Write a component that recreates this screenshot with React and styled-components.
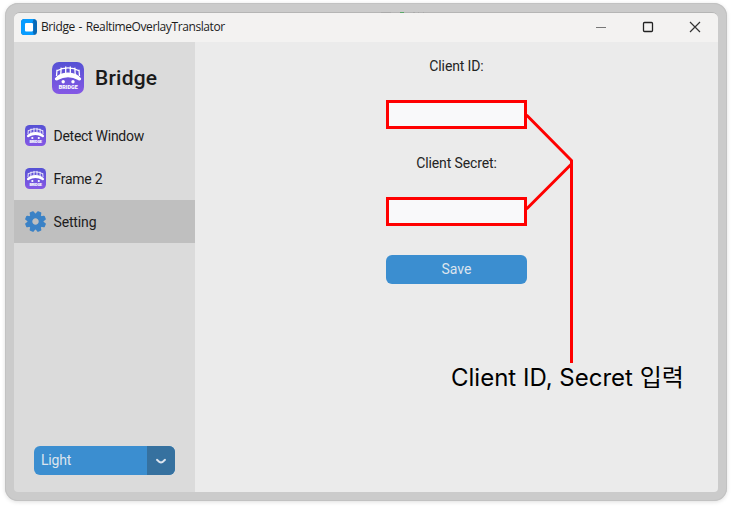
import React from 'react';
import styled, { createGlobalStyle } from 'styled-components';

const GlobalStyle = createGlobalStyle`
  *, *::before, *::after { box-sizing: border-box; }
  body { margin: 0; background: #fff; font-family: Roboto, "Noto Sans CJK KR", sans-serif; }
  svg { display: block; flex: none; }
`;

const Page = styled.main`
  position: relative;
  width: 732px;
  height: 508px;
  padding: 3px 5px 7px;
  overflow: hidden;
`;

const Frame = styled.div`
  width: 722px;
  height: 498px;
  padding: 9px 9px 9px;
  border-radius: 13px;
  background: #cbcbcb;
  box-shadow: inset 0 0 0 1px #c2c2c2, 0 1px 4px rgba(0, 0, 0, 0.13);
`;

const AppWindow = styled.div`
  display: flex;
  flex-direction: column;
  height: 480px;
  border-top: 1px solid #b5b5b5;
  border-radius: 6px 6px 4px 4px;
  overflow: hidden;
`;

const TitleBar = styled.header`
  display: flex;
  align-items: center;
  flex: none;
  height: 29px;
  padding: 0 17.5px 1px 7px;
  background: #f3f2f1;
`;

const WindowTitle = styled.span`
  margin-left: 4px;
  font: 12px/20px "Open Sans", sans-serif;
  letter-spacing: -0.4px;
  word-spacing: 1px;
  color: #1c1c1c;
  white-space: nowrap;
`;

const WindowControls = styled.div`
  display: flex;
  align-items: center;
  gap: 35px;
  margin-left: auto;
`;

const Body = styled.div`
  display: flex;
  flex: 1;
`;

const Sidebar = styled.aside`
  display: flex;
  flex-direction: column;
  width: 181px;
  background: #dbdbdb;
`;

const Brand = styled.div`
  display: flex;
  align-items: center;
  height: 72px;
  padding-left: 38px;
  gap: 11px;
`;

const BrandName = styled.h1`
  margin: 0;
  font-size: 21px;
  line-height: 28px;
  font-weight: 500;
  letter-spacing: 0.2px;
  color: #1a1a1a;
`;

const NavItem = styled.div`
  display: flex;
  align-items: center;
  gap: 7.5px;
  height: 43px;
  padding-left: 11px;
  font-size: 14px;
  letter-spacing: ${({ $tracking = '-0.27px' }) => $tracking};
  color: #1c1c1c;
  background: ${({ $active }) => ($active ? '#bfbfbf' : 'transparent')};
`;

const ThemeSelect = styled.div`
  display: flex;
  width: 141px;
  height: 29px;
  margin: auto 0 17px 20px;
  border-radius: 6px;
  background: #3b8ed0;
  overflow: hidden;
`;

const SelectValue = styled.span`
  flex: 1;
  padding-left: 7px;
  font-size: 14px;
  letter-spacing: -0.2px;
  line-height: 29px;
  color: #dce4ee;
`;

const SelectArrow = styled.span`
  display: grid;
  place-items: center;
  width: 28px;
  background: #36719f;
`;

const Content = styled.section`
  display: flex;
  flex-direction: column;
  align-items: center;
  flex: 1;
  padding-top: 14px;
  background: #ebebeb;
`;

const FieldLabel = styled.label`
  height: 20px;
  font-size: 14px;
  letter-spacing: -0.12px;
  line-height: 20px;
  color: #242424;
`;

const Field = styled.div`
  width: 141px;
  height: 29px;
  margin: ${({ $last }) => ($last ? '24px 0 29px' : '24px 0')};
  border: 3px solid #f00;
  background: #f9f9fa;
`;

const SaveButton = styled.button`
  width: 141px;
  height: 29px;
  padding: 0 0 1px;
  border: 0;
  border-radius: 6px;
  background: #3b8ed0;
  color: #dce4ee;
  font: 14px Roboto, sans-serif;
`;

const CalloutLines = styled.svg`
  position: absolute;
  left: 0;
  top: 0;
`;

const CalloutText = styled.div`
  position: absolute;
  left: 451px;
  top: 362px;
  font: 24px/32px Inter, "Noto Sans CJK KR", sans-serif;
  color: #000;
  white-space: nowrap;
`;

function BridgeIcon({ size, id }) {
  return (
    <svg width={size} height={size} viewBox="0 0 32 32">
      <defs>
        <linearGradient id={id} x1="0" y1="0" x2="0" y2="1">
          <stop offset="0" stopColor="#5551d4" />
          <stop offset="1" stopColor="#8558e5" />
        </linearGradient>
      </defs>
      <rect width="32" height="32" rx="7" fill={`url(#${id})`} />
      <path d="M2.8 16.5Q7 10.5 16 10.5T29.2 16.5Q29.3 18.3 27.5 18.6Q26.5 18.7 25.5 17.8Q21.5 15.2 16 15.2T6.5 17.8Q5.5 18.7 4.5 18.6Q2.7 18.3 2.8 16.5Z" fill="#fff" />
      <path d="M5 8.8Q10 5.9 16 5.9T27 8.8M5 7.8L4.5 14M9.2 5.6L8.8 12M13.7 4.4V11.5M18.3 4.4V11.5M22.8 5.6L23.2 12M27 7.8L27.5 14" fill="none" stroke="#fff" strokeWidth="1.3" />
      <circle cx="11.2" cy="19.8" r="1.7" fill="#fff" />
      <circle cx="21" cy="19.8" r="1.7" fill="#fff" />
      <text x="16.2" y="27.1" textAnchor="middle" textLength="19" lengthAdjust="spacingAndGlyphs" fontFamily="Roboto, sans-serif" fontSize="5" fontWeight="900" fill="#fff">BRIDGE</text>
    </svg>
  );
}

const TEETH = [22.5, 67.5, 112.5, 157.5, 202.5, 247.5, 292.5, 337.5];

function GearIcon() {
  return (
    <svg width="21" height="21" viewBox="-10.5 -10.5 21 21">
      <circle r="5.6" fill="none" stroke="#3b82c6" strokeWidth="4.8" />
      {TEETH.map((angle) => (
        <path key={angle} d="M-3 -6L-2.3 -9.6Q-2.1 -10.6 -1.3 -10.6H1.3Q2.1 -10.6 2.3 -9.6L3 -6Z" fill="#3b82c6" transform={`rotate(${angle})`} />
      ))}
    </svg>
  );
}

function AppIcon() {
  return (
    <svg width="16" height="16" viewBox="0 0 16 16">
      <rect width="16" height="16" rx="3.5" fill="#0868b5" />
      <path d="M3.5 0H12.8L11.5 3.5V12L13 16H3.5Q0 16 0 12.5V3.5Q0 0 3.5 0Z" fill="#079cff" />
      <path d="M4 4H11.5L13 3V12.5L11.5 12H4Z" fill="#0877cd" />
      <rect x="4" y="4" width="8" height="8.5" rx="1" fill="#fff" />
    </svg>
  );
}

export default function App() {
  return (
    <Page>
      <GlobalStyle />
      <Frame>
        <AppWindow>
          <TitleBar>
            <AppIcon />
            <WindowTitle>Bridge - RealtimeOverlayTranslator</WindowTitle>
            <WindowControls>
              <svg width="12" height="12"><path d="M1 6.5H11" stroke="#777" strokeWidth="1.2" /></svg>
              <svg width="12" height="12"><rect x="1.5" y="1.5" width="9" height="9" rx="1" fill="none" stroke="#222" strokeWidth="1.3" /></svg>
              <svg width="12" height="12"><path d="M1 1L11 11M11 1L1 11" stroke="#333" strokeWidth="1.2" /></svg>
            </WindowControls>
          </TitleBar>
          <Body>
            <Sidebar>
              <Brand>
                <BridgeIcon size={32} id="brand-fill" />
                <BrandName>Bridge</BrandName>
              </Brand>
              <NavItem><BridgeIcon size={21} id="detect-fill" />Detect Window</NavItem>
              <NavItem><BridgeIcon size={21} id="frame-fill" />Frame 2</NavItem>
              <NavItem $active $tracking="-0.15px"><GearIcon />Setting</NavItem>
              <ThemeSelect>
                <SelectValue>Light</SelectValue>
                <SelectArrow>
                  <svg width="12" height="8" viewBox="0 0 12 8"><path d="M2 2.8L4.4 4.9Q6 6 7.6 4.9L10 2.8" fill="none" stroke="#dce4ee" strokeWidth="2" strokeLinecap="round" /></svg>
                </SelectArrow>
              </ThemeSelect>
            </Sidebar>
            <Content>
              <FieldLabel>Client ID:</FieldLabel>
              <Field />
              <FieldLabel>Client Secret:</FieldLabel>
              <Field $last />
              <SaveButton>Save</SaveButton>
            </Content>
          </Body>
        </AppWindow>
      </Frame>
      <CalloutLines width="732" height="508">
        <path d="M526.5 115L571.5 160.5V363M526.5 209L571.5 164" fill="none" stroke="#f00" strokeWidth="3" />
        <path d="M381 12.5H391M413 12.5H415M418 12.5H419M423 12.5H424" stroke="#aaa" />
        <path d="M400 12.5H404" stroke="#5aa768" />
      </CalloutLines>
      <CalloutText>Client ID, Secret 입력</CalloutText>
    </Page>
  );
}
